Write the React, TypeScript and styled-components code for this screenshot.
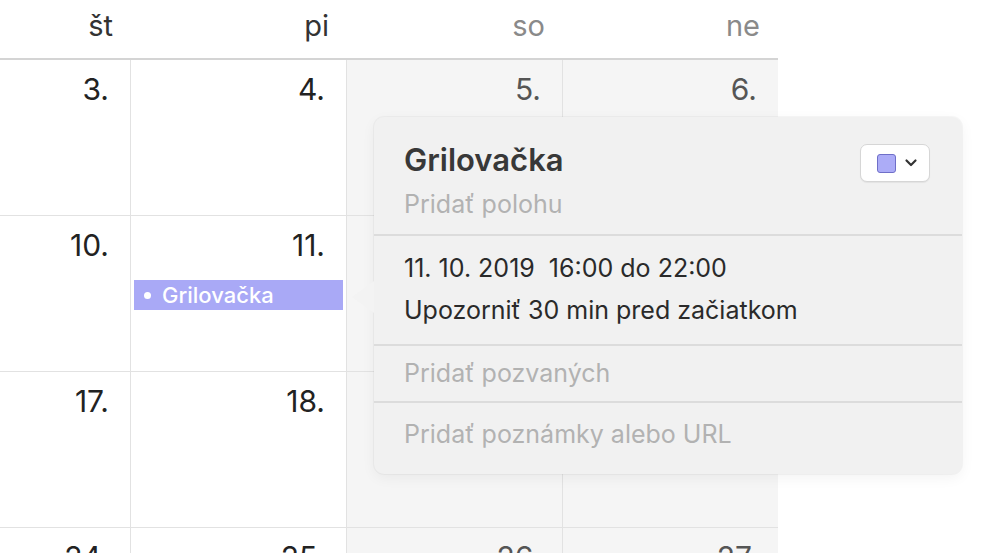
import React from 'react';
import styled, { createGlobalStyle } from 'styled-components';

const GlobalStyle = createGlobalStyle`
  html, body {
    margin: 0;
    padding: 0;
    background: #fff;
    overflow: hidden;
  }
  body {
    font-family: Inter, "Noto Sans", sans-serif;
    color: #222;
  }
`;

const Page = styled.div`
  position: relative;
  width: 988px;
  height: 553px;
  overflow: hidden;
`;

const Calendar = styled.div`
  width: 778px;
  display: grid;
  grid-template-columns: 131px 216px 216px 215px;
  grid-template-rows: 60px repeat(4, 156px);
`;

const HeaderCell = styled.div<{ weekend?: boolean }>`
  display: flex;
  align-items: center;
  justify-content: flex-end;
  padding-right: 18px;
  padding-bottom: 8px;
  font-size: 29px;
  color: ${({ weekend }) => (weekend ? '#8a8a8a' : '#333')};
  border-bottom: 2px solid #d4d4d4;
  background: #fff;
`;

const DayCell = styled.div<{ weekend?: boolean; last?: boolean }>`
  display: flex;
  flex-direction: column;
  align-items: stretch;
  padding-top: 11px;
  box-sizing: border-box;
  background: ${({ weekend }) => (weekend ? '#f5f5f5' : '#fff')};
  border-right: ${({ last }) => (last ? 'none' : '1px solid #e2e2e2')};
  border-bottom: 1px solid #e2e2e2;
`;

const DayNumber = styled.div<{ weekend?: boolean }>`
  align-self: flex-end;
  padding-right: 21px;
  font-size: 30px;
  line-height: 36px;
  color: ${({ weekend }) => (weekend ? '#555' : '#222')};
`;

const EventBar = styled.div`
  margin: 17px 3px 0 3px;
  height: 30px;
  display: flex;
  align-items: center;
  gap: 11px;
  padding-left: 10px;
  background: #a9a9f6;
  color: #fff;
  font-size: 22px;
  font-weight: 500;
`;

const EventDot = styled.span`
  width: 7px;
  height: 7px;
  border-radius: 50%;
  background: #fff;
`;

const Popover = styled.div`
  position: absolute;
  left: 374px;
  top: 117px;
  width: 588px;
  height: 357px;
  box-sizing: border-box;
  background: #f1f1f1;
  border-radius: 10px;
  box-shadow: 0 0 0 1px rgba(0, 0, 0, 0.03), 0 4px 14px rgba(0, 0, 0, 0.05);
  display: flex;
  flex-direction: column;
`;

const Arrow = styled.div`
  position: absolute;
  left: -22px;
  top: 164px;
  width: 0;
  height: 0;
  border-top: 16px solid transparent;
  border-bottom: 16px solid transparent;
  border-right: 22px solid #f3f3f3;
`;

const Section = styled.div<{ top: number; bottom: number; divided?: boolean }>`
  padding: ${({ top, bottom }) => `${top}px 32px ${bottom}px 30px`};
  border-top: ${({ divided }) => (divided ? '2px solid #dcdcdc' : 'none')};
`;

const TitleRow = styled.div`
  display: flex;
  justify-content: space-between;
  align-items: flex-start;
`;

const Title = styled.div`
  font-size: 31px;
  line-height: 34px;
  font-weight: 600;
  color: #383838;
`;

const Line = styled.div<{ muted?: boolean; height?: number; shift?: number }>`
  margin-top: ${({ shift }) => shift ?? 0}px;
  font-size: 25px;
  line-height: ${({ height }) => height ?? 42}px;
  color: ${({ muted }) => (muted ? '#b2b2b2' : '#2a2a2a')};
  white-space: pre;
`;

const ColorButton = styled.div`
  margin-top: 1px;
  width: 70px;
  height: 38px;
  box-sizing: border-box;
  display: flex;
  align-items: center;
  gap: 8px;
  padding-left: 16px;
  background: #fff;
  border: 1px solid #d6d6d6;
  border-radius: 7px;
  box-shadow: 0 1px 1px rgba(0, 0, 0, 0.06);
`;

const Swatch = styled.span`
  width: 19px;
  height: 19px;
  box-sizing: border-box;
  border-radius: 3px;
  background: #acacf7;
  border: 1px solid #6f6fc8;
`;

const weeks = [
  ['3.', '4.', '5.', '6.'],
  ['10.', '11.', '12.', '13.'],
  ['17.', '18.', '19.', '20.'],
  ['24.', '25.', '26.', '27.'],
];

const dayNames = ['št', 'pi', 'so', 'ne'];

const App: React.FC = () => {
  return (
    <Page>
      <GlobalStyle />
      <Calendar>
        {dayNames.map((name, i) => (
          <HeaderCell key={name} weekend={i >= 2}>
            {name}
          </HeaderCell>
        ))}
        {weeks.map((week, w) =>
          week.map((day, i) => (
            <DayCell key={day} weekend={i >= 2} last={i === 3}>
              <DayNumber weekend={i >= 2}>{day}</DayNumber>
              {w === 1 && i === 1 && (
                <EventBar>
                  <EventDot />
                  Grilovačka
                </EventBar>
              )}
            </DayCell>
          ))
        )}
      </Calendar>

      <Popover>
        <Arrow />
        <Section top={26} bottom={15}>
          <TitleRow>
            <Title>Grilovačka</Title>
            <ColorButton>
              <Swatch />
              <svg width="14" height="14" viewBox="0 0 14 14">
                <path d="M2.5 4.5l4.5 4.5 4.5-4.5" fill="none" stroke="#333" strokeWidth="2.2" strokeLinecap="round" strokeLinejoin="round" />
              </svg>
            </ColorButton>
          </TitleRow>
          <Line muted height={30} shift={7}>Pridať polohu</Line>
        </Section>
        <Section top={11} bottom={13} divided>
          <Line>{'11. 10. 2019  16:00 do 22:00'}</Line>
          <Line>Upozorniť 30 min pred začiatkom</Line>
        </Section>
        <Section top={6} bottom={7} divided>
          <Line muted>Pridať pozvaných</Line>
        </Section>
        <Section top={10} bottom={0} divided>
          <Line muted>Pridať poznámky alebo URL</Line>
        </Section>
      </Popover>
    </Page>
  );
};

export default App;
